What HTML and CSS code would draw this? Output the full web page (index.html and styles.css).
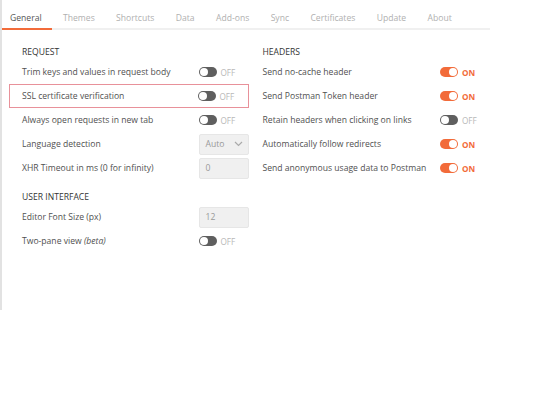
FILE: index.html
```html
<!DOCTYPE html>
<html lang="en">
<head>
    <meta charset="UTF-8">
    <title>Settings</title>
    <link rel="stylesheet" href="styles.css">
</head>
<body>
    <div class="settings">
        <div class="tabs">
            <span class="tab active">General</span>
            <span class="tab">Themes</span>
            <span class="tab">Shortcuts</span>
            <span class="tab">Data</span>
            <span class="tab">Add-ons</span>
            <span class="tab">Sync</span>
            <span class="tab">Certificates</span>
            <span class="tab">Update</span>
            <span class="tab">About</span>
        </div>
        <div class="panel">
            <div class="column left">
                <div class="section-title">REQUEST</div>
                <div class="row">
                    <span class="label">Trim keys and values in request body</span>
                    <span class="switch"><span class="track"></span><span class="state">OFF</span></span>
                </div>
                <div class="row highlight">
                    <span class="label">SSL certificate verification</span>
                    <span class="switch"><span class="track"></span><span class="state">OFF</span></span>
                </div>
                <div class="row">
                    <span class="label">Always open requests in new tab</span>
                    <span class="switch"><span class="track"></span><span class="state">OFF</span></span>
                </div>
                <div class="row">
                    <span class="label">Language detection</span>
                    <span class="field select">Auto
                        <svg width="9" height="6" viewBox="0 0 9 6"><path d="M1 1 L4.5 4.5 L8 1" fill="none" stroke="#aaa" stroke-width="1.2"/></svg>
                    </span>
                </div>
                <div class="row">
                    <span class="label">XHR Timeout in ms (0 for infinity)</span>
                    <span class="field">0</span>
                </div>
                <div class="section-title second">USER INTERFACE</div>
                <div class="row">
                    <span class="label">Editor Font Size (px)</span>
                    <span class="field">12</span>
                </div>
                <div class="row">
                    <span class="label">Two-pane view <i>(beta)</i></span>
                    <span class="switch"><span class="track"></span><span class="state">OFF</span></span>
                </div>
            </div>
            <div class="column right">
                <div class="section-title">HEADERS</div>
                <div class="row">
                    <span class="label">Send no-cache header</span>
                    <span class="switch on"><span class="track"></span><span class="state">ON</span></span>
                </div>
                <div class="row">
                    <span class="label">Send Postman Token header</span>
                    <span class="switch on"><span class="track"></span><span class="state">ON</span></span>
                </div>
                <div class="row">
                    <span class="label">Retain headers when clicking on links</span>
                    <span class="switch"><span class="track"></span><span class="state">OFF</span></span>
                </div>
                <div class="row">
                    <span class="label">Automatically follow redirects</span>
                    <span class="switch on"><span class="track"></span><span class="state">ON</span></span>
                </div>
                <div class="row">
                    <span class="label">Send anonymous usage data to Postman</span>
                    <span class="switch on"><span class="track"></span><span class="state">ON</span></span>
                </div>
            </div>
        </div>
    </div>
</body>
</html>
```

FILE: styles.css
```css
body {
    margin: 0;
    background: #fff;
    font-family: "Open Sans", Arial, sans-serif;
    font-size: 8.6px;
    color: #505050;
}
.settings {
    width: 488px;
    height: 310px;
    border-left: 2px solid #e2e2e2;
}
.tabs {
    display: flex;
    height: 30px;
    border-bottom: 2px solid #f0f0f0;
    box-sizing: border-box;
}
.tab {
    padding: 12px 10.7px 0;
    color: #b0b0b0;
}
.tab:first-child {
    padding-left: 8px;
}
.tab.active {
    color: #555;
    border-bottom: 2px solid #f26b3a;
    margin-bottom: -2px;
}
.panel {
    display: flex;
    padding: 14px 0 0 20px;
}
.column.left {
    width: 230px;
    margin-right: 14px;
}
.column.right {
    width: 231px;
}
.section-title {
    color: #333;
    height: 16px;
    line-height: 16px;
}
.section-title.second {
    margin-top: 9px;
}
.row {
    display: flex;
    align-items: center;
    justify-content: space-between;
    height: 24px;
    box-sizing: border-box;
}
.row.highlight {
    border: 1px solid #e8919a;
    margin-left: -13px;
    padding-left: 12px;
    padding-right: 0;
}
.switch {
    display: flex;
    align-items: center;
    width: 50px;
    font-size: 8.2px;
    color: #b8b8b8;
}
.track {
    width: 18px;
    height: 10px;
    border-radius: 5px;
    background: #5f5f5f;
    position: relative;
    margin-right: 4px;
}
.track::after {
    content: "";
    position: absolute;
    left: 1px;
    top: 1px;
    width: 8px;
    height: 8px;
    border-radius: 50%;
    background: #fff;
}
.switch.on {
    color: #f26b3a;
    font-weight: 700;
}
.switch.on .track {
    background: #f26b3a;
}
.switch.on .track::after {
    left: 9px;
}
.field {
    width: 50px;
    height: 21px;
    box-sizing: border-box;
    background: #f0f0f0;
    border: 1px solid #e6e6e6;
    border-radius: 2px;
    padding-left: 6px;
    line-height: 19px;
    color: #999;
}
.field.select {
    display: flex;
    align-items: center;
    justify-content: space-between;
    padding-right: 5px;
}
```
